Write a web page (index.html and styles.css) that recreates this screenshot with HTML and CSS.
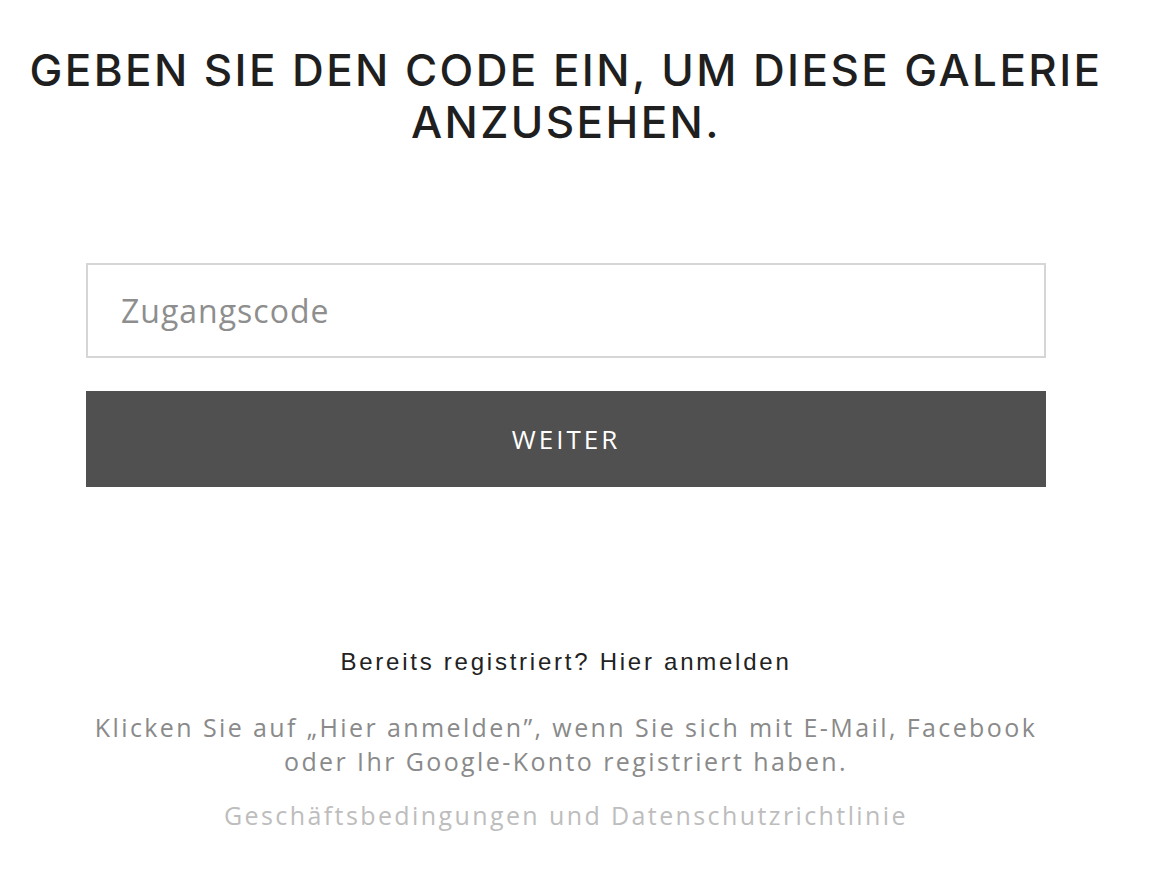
FILE: index.html
```html
<!DOCTYPE html>
<html lang="de">
<head>
<meta charset="utf-8">
<link rel="stylesheet" href="styles.css">
</head>
<body>
<main class="page">
  <h1 class="title">GEBEN SIE DEN CODE EIN, UM DIESE GALERIE ANZUSEHEN.</h1>
  <form class="form">
    <input class="code-input" type="text" placeholder="Zugangscode">
    <button class="submit" type="button">WEITER</button>
  </form>
  <div class="footer">
    <p class="login">Bereits registriert? Hier anmelden</p>
    <p class="hint">Klicken Sie auf „Hier anmelden”, wenn Sie sich mit E-Mail, Facebook<br>oder Ihr Google-Konto registriert haben.</p>
    <p class="terms">Geschäftsbedingungen und Datenschutzrichtlinie</p>
  </div>
</main>
</body>
</html>
```

FILE: styles.css
```css
html, body {
  margin: 0;
  padding: 0;
  background: #ffffff;
}
.page {
  width: 1132px;
  display: flex;
  flex-direction: column;
  align-items: center;
  font-family: "Open Sans", "Noto Sans", sans-serif;
}
.title {
  margin: 44px 0 0;
  font-family: Inter, "Open Sans", sans-serif;
  font-weight: 500;
  font-size: 44px;
  line-height: 52px;
  letter-spacing: 2.4px;
  color: #1f1f1f;
  text-align: center;
  width: 1120px;
}
.form {
  margin-top: 115px;
  width: 960px;
  display: flex;
  flex-direction: column;
  gap: 33px;
}
.code-input {
  box-sizing: border-box;
  height: 95px;
  border: 2px solid #d6d6d6;
  padding: 0 33px;
  font-family: "Open Sans", sans-serif;
  font-size: 32px;
  letter-spacing: 1px;
  color: #333;
  outline: none;
}
.code-input::placeholder {
  color: #8e8e8e;
}
.submit {
  height: 96px;
  border: 0;
  background: #505050;
  color: #ffffff;
  font-family: "Open Sans", sans-serif;
  font-weight: 400;
  font-size: 26px;
  letter-spacing: 3px;
}
.footer {
  margin-top: 158px;
  display: flex;
  flex-direction: column;
  align-items: center;
  text-align: center;
}
.login {
  margin: 0;
  font-family: "Liberation Sans", Arial, sans-serif;
  font-size: 24px;
  line-height: 34px;
  letter-spacing: 2.75px;
  color: #222;
}
.hint {
  margin: 31px 0 0;
  font-size: 25px;
  line-height: 34px;
  letter-spacing: 2.4px;
  color: #8a8a8a;
}
.terms {
  margin: 20px 0 0;
  font-size: 25px;
  line-height: 34px;
  letter-spacing: 2.4px;
  color: #bdbdbd;
}
```
